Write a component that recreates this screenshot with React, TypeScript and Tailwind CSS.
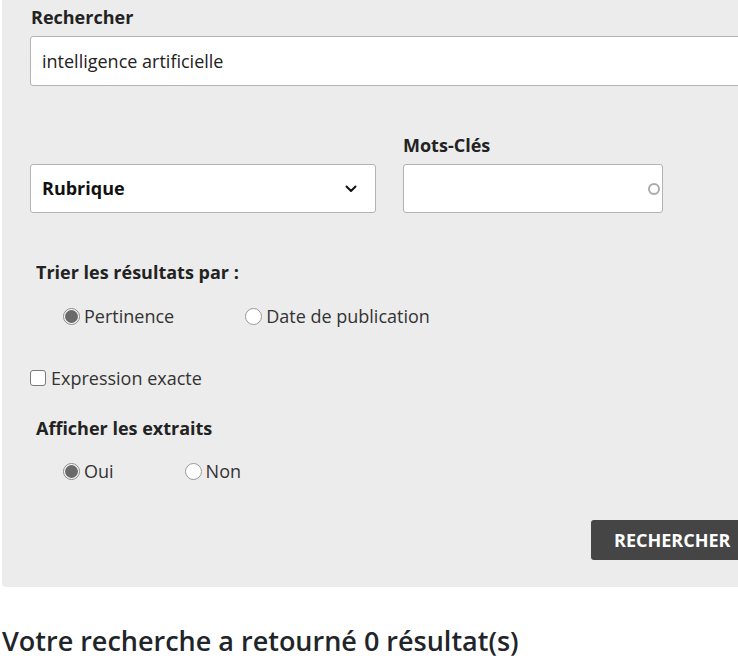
import React, { useState } from "react";

const font = { fontFamily: '"Open Sans", "Noto Sans", sans-serif' };

const Radio = ({ checked, label, onClick }: { checked: boolean; label: string; onClick: () => void }) => (
  <label className="flex items-center cursor-pointer mr-[71px]" onClick={onClick}>
    {checked ? (
      <span className="w-[17px] h-[17px] rounded-full border border-[#888] bg-white flex items-center justify-center">
        <span className="w-[13px] h-[13px] rounded-full bg-[#6a6a6a]" />
      </span>
    ) : (
      <span className="w-[17px] h-[17px] rounded-full border border-[#999] bg-white" />
    )}
    <span className="ml-[4px] text-[18px] leading-[24px] text-[#333]">{label}</span>
  </label>
);

const App = () => {
  const [query, setQuery] = useState("intelligence artificielle");
  const [sort, setSort] = useState("pertinence");
  const [extraits, setExtraits] = useState("oui");
  const [exact, setExact] = useState(false);

  return (
    <div className="w-[738px] min-h-[665px] bg-white overflow-hidden" style={font}>
      <div className="ml-[2px] w-[790px] bg-[#ececec] rounded-bl-[4px] pl-[28px] pr-[40px] pt-[5px] pb-[27px]">
        <div className="text-[18px] font-bold text-[#222] leading-[24px] pl-[1px]">Rechercher</div>
        <input
          value={query}
          onChange={(e) => setQuery(e.target.value)}
          className="mt-[7px] w-full h-[50px] bg-white border border-[#b3b3b3] rounded-[3px] px-[11px] text-[18px] text-[#222] outline-none"
        />

        <div className="mt-[47px] flex items-end gap-[27px]">
          <div className="w-[346px] h-[49px] bg-white border border-[#b3b3b3] rounded-[3px] flex items-center justify-between pl-[11px] pr-[18px]">
            <span className="text-[18px] font-bold text-[#111]">Rubrique</span>
            <svg width="12" height="8" viewBox="0 0 12 8" fill="none">
              <path d="M1.5 1.5 L6 6 L10.5 1.5" stroke="#111" strokeWidth="2" strokeLinecap="round" strokeLinejoin="round" />
            </svg>
          </div>
          <div className="flex flex-col">
            <div className="text-[18px] font-bold text-[#222] leading-[24px]">Mots-Clés</div>
            <div className="mt-[7px] w-[260px] h-[49px] bg-white border border-[#b3b3b3] rounded-[3px] flex items-center justify-end pr-[2px]">
              <span className="w-[12px] h-[12px] rounded-full border-2 border-[#aaa]" />
            </div>
          </div>
        </div>

        <div className="mt-[47px] pl-[6px] text-[18px] font-bold text-[#222] leading-[24px]">Trier les résultats par :</div>
        <div className="mt-[20px] pl-[33px] flex items-center h-[24px]">
          <Radio checked={sort === "pertinence"} label="Pertinence" onClick={() => setSort("pertinence")} />
          <Radio checked={sort === "date"} label="Date de publication" onClick={() => setSort("date")} />
        </div>

        <label className="mt-[38px] flex items-center h-[24px] cursor-pointer" onClick={() => setExact(!exact)}>
          <span className="w-4 h-4 rounded-[3px] border border-[#7a7a7a] bg-white" />
          <span className="ml-[5px] text-[18px] text-[#333]">Expression exacte</span>
        </label>

        <div className="mt-[26px] pl-[6px] text-[18px] font-bold text-[#222] leading-[24px]">Afficher les extraits</div>
        <div className="mt-[19px] pl-[33px] flex items-center h-[24px]">
          <Radio checked={extraits === "oui"} label="Oui" onClick={() => setExtraits("oui")} />
          <Radio checked={extraits === "non"} label="Non" onClick={() => setExtraits("non")} />
        </div>

        <div className="mt-[37px] pl-[561px]">
          <button className="h-[40px] bg-[#454545] rounded-[3px] pl-[23px] pr-[30px] text-[18px] font-bold text-white">
            RECHERCHER
          </button>
        </div>
      </div>

      <h2 className="mt-[36px] ml-[2px] text-[27px] font-semibold text-[#212529] leading-[36px]">
        Votre recherche a retourné 0 résultat(s)
      </h2>
    </div>
  );
};

export default App;
